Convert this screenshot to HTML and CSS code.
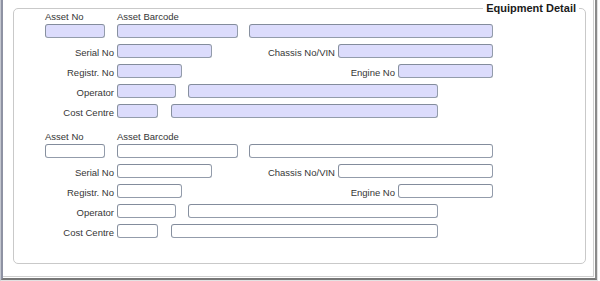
FILE: index.html
```html
<!DOCTYPE html>
<html>
<head>
<meta charset="utf-8">
<link rel="stylesheet" href="styles.css">
</head>
<body>
<div class="window">
  <div class="frame">
    <div class="panel">
      <div class="group">
        <span class="legend">Equipment Detail</span>

        <div class="block filled">
          <div class="head">
            <span class="hlabel h-asset">Asset No</span>
            <span class="hlabel">Asset Barcode</span>
          </div>
          <div class="row">
            <input class="fld w-asset">
            <input class="fld w-barcode">
            <input class="fld w-desc">
          </div>
          <div class="row">
            <label class="lbl">Serial No</label>
            <input class="fld w-serial">
            <label class="lbl2 l-chassis">Chassis No/VIN</label>
            <input class="fld w-chassis">
          </div>
          <div class="row">
            <label class="lbl">Registr. No</label>
            <input class="fld w-reg">
            <label class="lbl2 l-engine">Engine No</label>
            <input class="fld w-engine">
          </div>
          <div class="row">
            <label class="lbl">Operator</label>
            <input class="fld w-op">
            <input class="fld w-opname">
          </div>
          <div class="row">
            <label class="lbl">Cost Centre</label>
            <input class="fld w-cc">
            <input class="fld w-ccname">
          </div>
        </div>

        <div class="block">
          <div class="head">
            <span class="hlabel h-asset">Asset No</span>
            <span class="hlabel">Asset Barcode</span>
          </div>
          <div class="row">
            <input class="fld w-asset">
            <input class="fld w-barcode">
            <input class="fld w-desc">
          </div>
          <div class="row">
            <label class="lbl">Serial No</label>
            <input class="fld w-serial">
            <label class="lbl2 l-chassis">Chassis No/VIN</label>
            <input class="fld w-chassis">
          </div>
          <div class="row">
            <label class="lbl">Registr. No</label>
            <input class="fld w-reg">
            <label class="lbl2 l-engine">Engine No</label>
            <input class="fld w-engine">
          </div>
          <div class="row">
            <label class="lbl">Operator</label>
            <input class="fld w-op">
            <input class="fld w-opname">
          </div>
          <div class="row">
            <label class="lbl">Cost Centre</label>
            <input class="fld w-cc">
            <input class="fld w-ccname">
          </div>
        </div>
      </div>
    </div>
  </div>
</div>
</body>
</html>
```

FILE: styles.css
```css
html, body {
  margin: 0;
  padding: 0;
  background: #ffffff;
}

body {
  font-family: "Liberation Sans", Arial, sans-serif;
  font-size: 9.5px;
  color: #363636;
}

.window {
  box-sizing: border-box;
  width: 598px;
  height: 281px;
  border-left: 1px solid #c4c7d0;
  border-right: 1px solid #e2e2e2;
  border-bottom: 1px solid #e2e2e2;
}

.frame {
  box-sizing: border-box;
  height: 100%;
  border-left: 2px solid #8e92a3;
  border-right: 2px solid #8a8a8a;
  border-bottom: 2px solid #777777;
  padding-right: 1px;
  padding-bottom: 1px;
}

.panel {
  box-sizing: border-box;
  height: 100%;
  border-right: 1px solid #d0d0d0;
  border-bottom: 1px solid #d0d0d0;
  padding-top: 8px;
  padding-left: 10px;
}

.group {
  position: relative;
  box-sizing: border-box;
  width: 573px;
  height: 256px;
  border: 1px solid #c9c9c9;
  border-radius: 5px;
}

.legend {
  position: absolute;
  top: -7px;
  right: 6px;
  padding: 0 3px;
  background: #ffffff;
  font-weight: bold;
  font-size: 11px;
  line-height: 13px;
  color: #1a1a1a;
}

.block {
  display: flex;
  flex-direction: column;
  gap: 6px;
}

.block + .block {
  margin-top: 11px;
}

.head {
  display: flex;
  height: 15px;
  margin-bottom: -6px;
}

.hlabel {
  line-height: 14px;
  padding-top: 0.5px;
}

.h-asset {
  margin-left: 31px;
  width: 72px;
}

.row {
  display: flex;
  align-items: flex-start;
  height: 14px;
}

.lbl {
  box-sizing: border-box;
  width: 103px;
  padding-right: 3px;
  text-align: right;
  line-height: 14px;
  padding-top: 2px;
  white-space: nowrap;
}

.lbl2 {
  box-sizing: border-box;
  padding-right: 3px;
  text-align: right;
  line-height: 14px;
  padding-top: 2px;
  white-space: nowrap;
}

.l-chassis { width: 126px; }
.l-engine { width: 216px; }

.fld {
  -webkit-appearance: none;
  appearance: none;
  box-sizing: border-box;
  height: 14px;
  margin: 0;
  padding: 0;
  border: 1px solid #939cab;
  border-top-color: #838c9c;
  border-left-color: #879020;
  border-left-color: #87909f;
  border-radius: 3px;
  background: #ffffff;
  font: inherit;
  flex: none;
}

.filled .fld {
  background: #dcdcfc;
}

.w-asset { margin-left: 31px; width: 60px; }
.w-barcode { margin-left: 12px; width: 121px; }
.w-desc { margin-left: 11px; width: 244px; }
.w-serial { width: 95px; }
.w-chassis { width: 155px; }
.w-reg { width: 65px; }
.w-engine { width: 95px; }
.w-op { width: 59px; }
.w-opname { margin-left: 12px; width: 250px; }
.w-cc { width: 41px; }
.w-ccname { margin-left: 13px; width: 267px; }
```
